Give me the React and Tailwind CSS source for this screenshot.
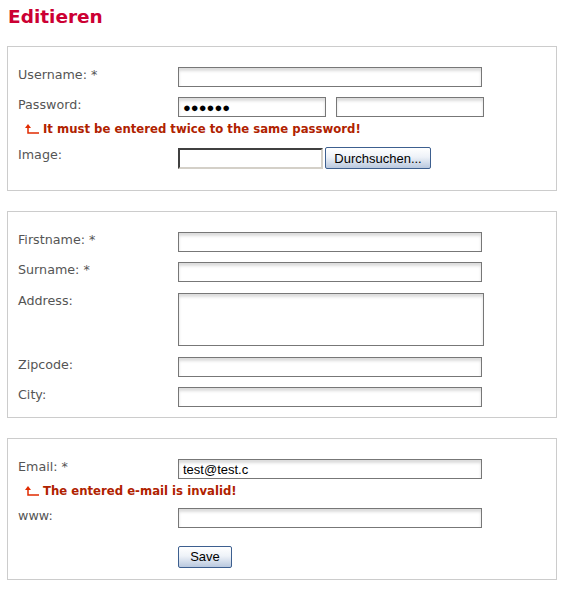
import React from "react";

const labelCls = "w-[160px] shrink-0 text-[12.7px] leading-[16px] text-[#555]";
const inputCls =
  "h-[20px] border border-[#777] bg-white shadow-[inset_0_3px_3px_#dcdcdc] px-[4px] text-[13px] font-['Liberation_Sans',Arial,sans-serif] text-black outline-none";
const buttonCls =
  "h-[22px] border border-[#3d5f8f] rounded-[2px] bg-[linear-gradient(#ffffff,#eef2f8_45%,#b9c8de)] text-[13px] text-black font-['Liberation_Sans',Arial,sans-serif] leading-none";

function ErrorArrow() {
  return (
    <svg width="14" height="11" viewBox="0 0 14 11" className="shrink-0">
      <path d="M3 0 L6 4 L0 4 Z" fill="#e12b00" />
      <path d="M3 3 V9 H14" stroke="#e12b00" strokeWidth="1.5" fill="none" />
    </svg>
  );
}

function ErrorLine({ text }) {
  return (
    <div className="flex items-center gap-[4px] pl-[7px] text-[11.7px] leading-[15px] font-bold text-[#b02200]">
      <ErrorArrow />
      <span>{text}</span>
    </div>
  );
}

function Row({ label, children, className = "" }) {
  return (
    <div className={`flex items-start ${className}`}>
      <div className={labelCls}>{label}</div>
      {children}
    </div>
  );
}

export default function App() {
  return (
    <div className="bg-white w-[564px] min-h-[593px] px-[7px] pt-[5px] font-['DejaVu_Sans',Verdana,sans-serif]">
      <h1 className="text-[18.5px] leading-[23px] font-bold text-[#cc0033] pl-[1px]">Editieren</h1>

      {/* Account */}
      <fieldset className="mt-[18px] w-[550px] border border-[#cccccc] pl-[10px] pt-[20px] pb-[21px]">
        <Row label="Username: *">
          <input className={`${inputCls} w-[304px]`} />
        </Row>
        <Row label="Password:" className="mt-[10px]">
          <div className="flex gap-[10px]">
            <input
              className={`${inputCls} w-[148px] text-[12.5px]`}
              defaultValue="●●●●●●"
            />
            <input className={`${inputCls} w-[148px]`} />
          </div>
        </Row>
        <div className="mt-[5px]">
          <ErrorLine text="It must be entered twice to the same password!" />
        </div>
        <Row label="Image:" className="mt-[10px]">
          <div className="flex items-center gap-[2px]">
            <input className="h-[21px] w-[145px] border-2 border-t-[#404040] border-l-[#404040] border-b-[#d4d0c8] border-r-[#d4d0c8] bg-white outline-none" />
            <button className={`${buttonCls} w-[106px]`}>Durchsuchen...</button>
          </div>
        </Row>
      </fieldset>

      {/* Personal */}
      <fieldset className="mt-[20px] w-[550px] border border-[#cccccc] pl-[10px] pt-[20px] pb-[10px]">
        <Row label="Firstname: *">
          <input className={`${inputCls} w-[304px]`} />
        </Row>
        <Row label="Surname: *" className="mt-[10px]">
          <input className={`${inputCls} w-[304px]`} />
        </Row>
        <Row label="Address:" className="mt-[11px]">
          <textarea className="h-[53px] w-[306px] border border-[#777] bg-white shadow-[inset_0_3px_3px_#dcdcdc] outline-none resize-none" />
        </Row>
        <Row label="Zipcode:" className="mt-[11px]">
          <input className={`${inputCls} w-[304px]`} />
        </Row>
        <Row label="City:" className="mt-[10px]">
          <input className={`${inputCls} w-[304px]`} />
        </Row>
      </fieldset>

      {/* Contact */}
      <fieldset className="mt-[20px] w-[550px] border border-[#cccccc] pl-[10px] pt-[20px] pb-[11px]">
        <Row label="Email: *">
          <input className={`${inputCls} w-[304px]`} defaultValue="test@test.c" />
        </Row>
        <div className="mt-[5px]">
          <ErrorLine text="The entered e-mail is invalid!" />
        </div>
        <Row label="www:" className="mt-[9px]">
          <input className={`${inputCls} w-[304px]`} />
        </Row>
        <div className="mt-[16px] pl-[160px]">
          <button className={`${buttonCls} w-[54px]`}>Save</button>
        </div>
      </fieldset>
    </div>
  );
}
